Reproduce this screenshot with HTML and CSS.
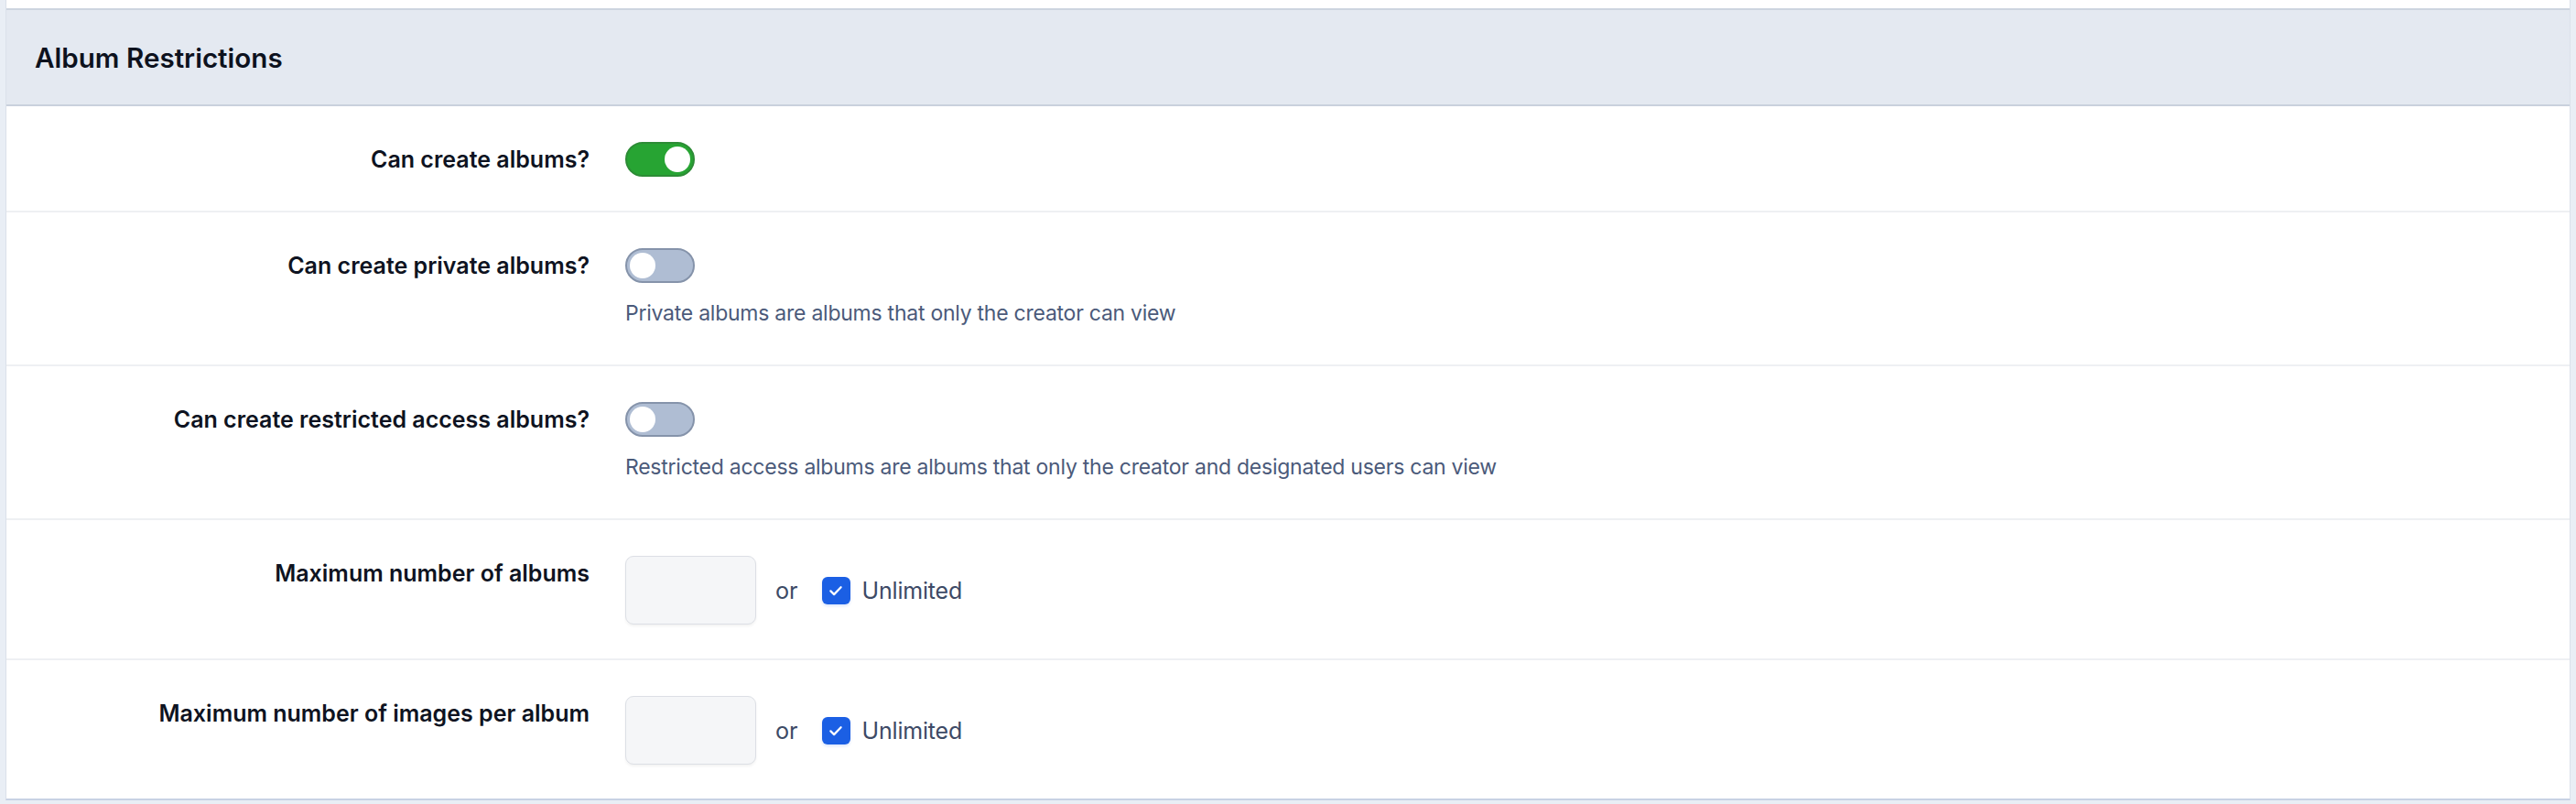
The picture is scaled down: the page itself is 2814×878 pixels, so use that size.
FILE: index.html
```html
<!DOCTYPE html>
<html lang="en">
<head>
    <meta charset="UTF-8">
    <title>Album Restrictions</title>
    <link rel="stylesheet" href="styles.css">
</head>
<body>
    <div class="card">
        <div class="card-top"></div>
        <div class="card-header">
            <h2>Album Restrictions</h2>
        </div>

        <div class="row">
            <label class="row-label">Can create albums?</label>
            <div class="row-field">
                <span class="toggle on"><span class="knob"></span></span>
            </div>
        </div>

        <div class="row">
            <label class="row-label">Can create private albums?</label>
            <div class="row-field">
                <span class="toggle"><span class="knob"></span></span>
                <p class="help">Private albums are albums that only the creator can view</p>
            </div>
        </div>

        <div class="row">
            <label class="row-label">Can create restricted access albums?</label>
            <div class="row-field">
                <span class="toggle"><span class="knob"></span></span>
                <p class="help">Restricted access albums are albums that only the creator and designated users can view</p>
            </div>
        </div>

        <div class="row">
            <label class="row-label">Maximum number of albums</label>
            <div class="row-field inline">
                <input type="text" class="num-input">
                <span class="or">or</span>
                <label class="check">
                    <span class="box">
                        <svg width="20" height="20" viewBox="0 0 16 16"><path d="M3.5 8.3l3 3L12.5 5" fill="none" stroke="#fff" stroke-width="1.8" stroke-linecap="round" stroke-linejoin="round"/></svg>
                    </span>
                    Unlimited
                </label>
            </div>
        </div>

        <div class="row last">
            <label class="row-label">Maximum number of images per album</label>
            <div class="row-field inline">
                <input type="text" class="num-input">
                <span class="or">or</span>
                <label class="check">
                    <span class="box">
                        <svg width="20" height="20" viewBox="0 0 16 16"><path d="M3.5 8.3l3 3L12.5 5" fill="none" stroke="#fff" stroke-width="1.8" stroke-linecap="round" stroke-linejoin="round"/></svg>
                    </span>
                    Unlimited
                </label>
            </div>
        </div>
    </div>
</body>
</html>
```

FILE: styles.css
```css
body {
    margin: 0;
    padding: 0 6px;
    background-color: #e9eef5;
    font-family: Inter, "Noto Sans", sans-serif;
    color: #0e1321;
}
.card {
    background: #fff;
    border-left: 1px solid #dbe1ea;
    border-right: 1px solid #dbe1ea;
    border-bottom: 2px solid #c8d2e4;
}
.card-top {
    height: 9px;
}
.card-header {
    background-color: #e4e9f1;
    border-top: 2px solid #cdd4df;
    border-bottom: 2px solid #c9d1dd;
    height: 103px;
    display: flex;
    align-items: center;
    padding-left: 31px;
}
.card-header h2 {
    margin: 0;
    font-size: 29.6px;
    font-weight: 600;
    color: #0d121e;
}
.row {
    display: grid;
    grid-template-columns: 637px 1fr;
    column-gap: 39px;
    padding: 39px 0 37px;
    border-bottom: 2px solid #eef0f3;
}
.row.last {
    border-bottom: none;
}
.row-label {
    text-align: right;
    font-size: 25px;
    font-weight: 600;
    line-height: 38px;
}
.row-field.inline {
    display: flex;
    align-items: center;
}
.toggle {
    display: flex;
    align-items: center;
    box-sizing: border-box;
    width: 76px;
    height: 38px;
    padding: 0 3px;
    border-radius: 19px;
    background-color: #afbdd3;
    border: 2px solid #8593aa;
}
.toggle.on {
    justify-content: flex-end;
    background-color: #27a433;
    border-color: #2d8c36;
}
.knob {
    width: 28px;
    height: 28px;
    border-radius: 50%;
    background: #fff;
}
.help {
    margin: 14px 0 0;
    font-size: 23px;
    letter-spacing: -0.25px;
    line-height: 38px;
    color: #4b5a7a;
}
.num-input {
    box-sizing: border-box;
    width: 143px;
    height: 75px;
    margin: 0;
    background: #f5f6f8;
    border: 1.5px solid #dcdfe5;
    border-radius: 9px;
    box-shadow: 0 2px 3px rgba(0,0,0,0.05);
}
.or {
    margin-left: 21px;
    font-size: 25.2px;
    color: #3d4a66;
}
.check {
    display: flex;
    align-items: center;
    margin-left: 26px;
    font-size: 25px;
    letter-spacing: -0.2px;
    color: #3d4a66;
}
.box {
    display: flex;
    align-items: center;
    justify-content: center;
    width: 31px;
    height: 30px;
    margin-right: 13px;
    border-radius: 6px;
    background-color: #1b5fe4;
    box-shadow: 0 2px 3px rgba(27,95,228,0.15);
}
```
